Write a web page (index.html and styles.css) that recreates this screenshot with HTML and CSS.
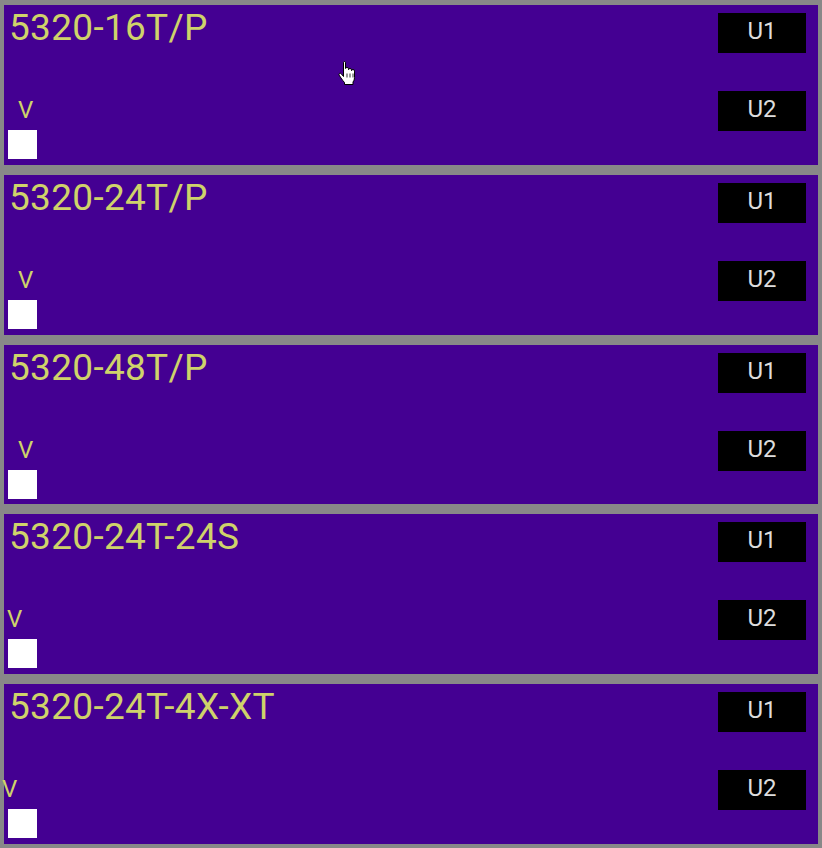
FILE: index.html
```html
<!DOCTYPE html>
<html>
<head>
<meta charset="utf-8">
<link rel="stylesheet" href="styles.css">
</head>
<body>
<div class="stack">
  <div class="panel">
    <div class="left">
      <div class="title">5320-16T/P</div>
      <div class="bottom">
        <div class="v v-mid">V</div>
        <div class="square"></div>
      </div>
    </div>
    <div class="right">
      <div class="unit">U1</div>
      <div class="unit unit-2">U2</div>
    </div>
    <svg class="cursor" width="18" height="25" viewBox="-0.5 -0.5 18 25">
      <path d="M5,1.2 Q5,0 6,0 Q7,0 7,1.2 V7 Q7.2,6 8.5,6 Q10,6 10,7.2 V8.2 Q10.3,7 11.5,7 Q13,7 13,8.4 V9.2 Q13.3,8 14.5,8 Q16,8 16,9.6 V16 Q16,19 14.5,20.5 V23 H6 V21 Q4.5,19.5 2.5,16.5 L0.6,13.6 Q0,12.4 1.1,11.9 Q2.2,11.5 3,12.6 L5,15 Z" fill="#fff" stroke="#000" stroke-width="1"/>
      <path d="M8.5,12 V16 M11.5,12 V16 M14.5,12 V16" stroke="#000" stroke-width="0.8"/>
    </svg>
  </div>
  <div class="panel">
    <div class="left">
      <div class="title">5320-24T/P</div>
      <div class="bottom">
        <div class="v v-mid">V</div>
        <div class="square"></div>
      </div>
    </div>
    <div class="right">
      <div class="unit">U1</div>
      <div class="unit unit-2">U2</div>
    </div>
  </div>
  <div class="panel">
    <div class="left">
      <div class="title">5320-48T/P</div>
      <div class="bottom">
        <div class="v v-mid">V</div>
        <div class="square"></div>
      </div>
    </div>
    <div class="right">
      <div class="unit">U1</div>
      <div class="unit unit-2">U2</div>
    </div>
  </div>
  <div class="panel">
    <div class="left">
      <div class="title">5320-24T-24S</div>
      <div class="bottom">
        <div class="v v-near">V</div>
        <div class="square"></div>
      </div>
    </div>
    <div class="right">
      <div class="unit">U1</div>
      <div class="unit unit-2">U2</div>
    </div>
  </div>
  <div class="panel">
    <div class="left">
      <div class="title">5320-24T-4X-XT</div>
      <div class="bottom">
        <div class="v v-edge">V</div>
        <div class="square"></div>
      </div>
    </div>
    <div class="right">
      <div class="unit">U1</div>
      <div class="unit unit-2">U2</div>
    </div>
  </div>
</div>
</body>
</html>
```

FILE: styles.css
```css
html, body {
  margin: 0;
  padding: 0;
}
body {
  background: #888888;
  font-family: Roboto, "Liberation Sans", sans-serif;
  width: 822px;
  height: 848px;
  overflow: hidden;
}
.stack {
  display: flex;
  flex-direction: column;
  gap: 10px;
  padding: 5px 4px 0 4px;
}
.panel {
  position: relative;
  display: flex;
  justify-content: space-between;
  background: #440092;
  height: 159.75px;
  box-sizing: border-box;
  padding: 2px 12px 5.75px 4px;
}
.left {
  display: flex;
  flex-direction: column;
  justify-content: space-between;
}
.title {
  font-size: 37px;
  line-height: 42px;
  letter-spacing: 0.3px;
  color: #cfd36a;
  margin-left: 1px;
  white-space: nowrap;
}
.bottom {
  display: flex;
  flex-direction: column;
  align-items: flex-start;
}
.v {
  font-size: 24px;
  line-height: 27px;
  color: #cfd36a;
  margin-bottom: 6px;
}
.v-mid { margin-left: 10px; }
.v-near { margin-left: -1px; }
.v-edge { margin-left: -6px; }
.square {
  width: 29px;
  height: 29px;
  background: #ffffff;
}
.right {
  display: flex;
  flex-direction: column;
}
.unit {
  margin-top: 6px;
  width: 88px;
  height: 40px;
  box-sizing: border-box;
  padding-bottom: 3px;
  background: #000000;
  color: #dddddd;
  font-size: 24px;
  line-height: 36px;
  text-align: center;
}
.unit-2 {
  margin-top: 38px;
}
.cursor {
  position: absolute;
  left: 334px;
  top: 56px;
}
```
